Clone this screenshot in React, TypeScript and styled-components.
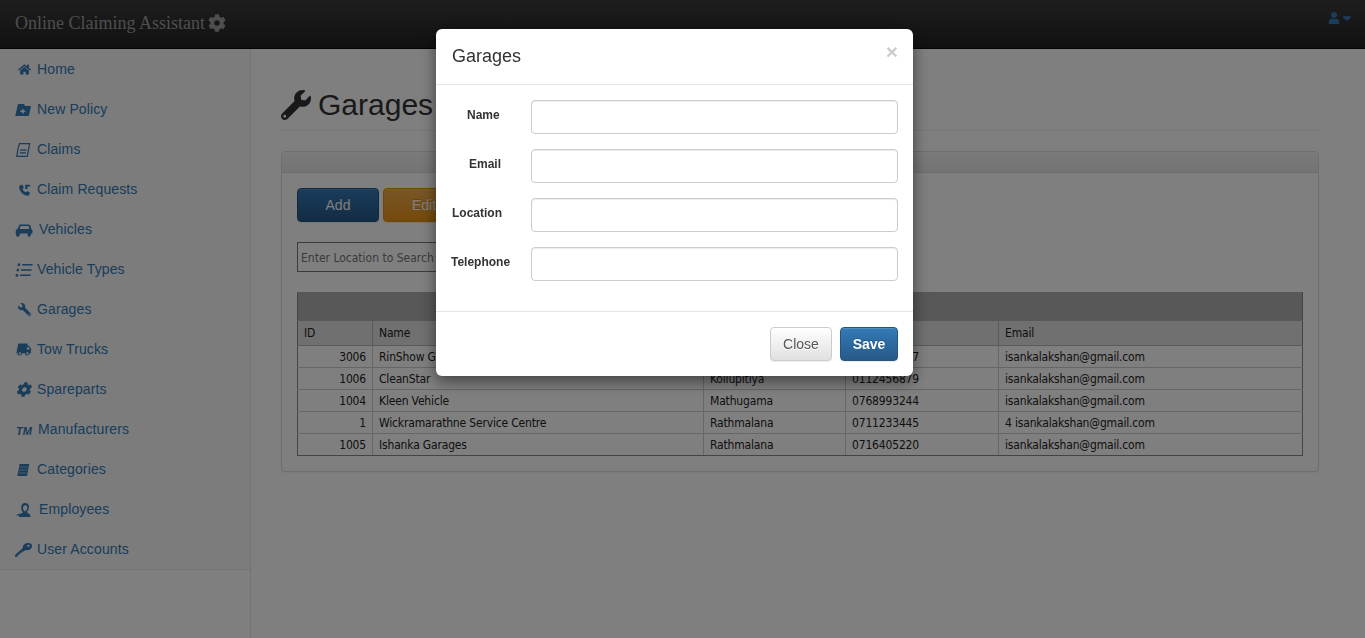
import * as React from "react";
import styled, { createGlobalStyle } from "styled-components";
import { FaCaretDown, FaCog, FaHome, FaTruck, FaUser, FaWrench } from "react-icons/fa";

const GlobalStyle = createGlobalStyle`
  * { box-sizing: border-box; }
  html, body { margin: 0; height: 100%; overflow: hidden; }
  body {
    font-family: "Liberation Sans", Arial, sans-serif;
    font-size: 14px;
    color: #333;
    background: #fff;
  }
`;

const Shell = styled.div`
  display: flex;
  flex-direction: column;
  height: 100vh;
`;

const Navbar = styled.header`
  display: flex;
  align-items: center;
  justify-content: space-between;
  flex: 0 0 49px;
  padding: 0 11px 2px 15px;
  background: linear-gradient(to bottom, #3c3c3c, #222);
  border-bottom: 1px solid #080808;
`;

const Brand = styled.div`
  display: flex;
  align-items: center;
  gap: 3px;
  font-family: "Liberation Serif", "Times New Roman", serif;
  font-size: 18px;
  color: #9d9d9d;
`;

const UserMenu = styled.div`
  display: flex;
  align-items: center;
  color: #337ab7;
  margin-bottom: 10px;
`;

const Columns = styled.div`
  display: flex;
  flex: 1;
  min-height: 0;
`;

const Sidebar = styled.nav`
  flex: 0 0 250px;
  align-self: flex-start;
  background: #f8f8f8;
  border-bottom: 1px solid #e7e7e7;
`;

const NavItem = styled.a<{ $gap: number }>`
  display: flex;
  align-items: center;
  gap: ${(p) => p.$gap}px;
  height: 40px;
  padding: 0 15px;
  color: #337ab7;
  line-height: 20px;
  letter-spacing: 0.12px;
`;

const NavIcon = styled.span<{ $slant?: boolean }>`
  display: inline-flex;
  align-items: center;
  justify-content: center;
  width: 18px;
  height: 18px;
  font-size: 14px;
  transform: ${(p) => (p.$slant ? "skewX(-12deg)" : "none")};
`;

const TmMark = styled.span`
  margin-top: 3px;
  font-size: 11px;
  font-weight: 700;
  font-style: italic;
  letter-spacing: 0;
  text-align: center;
`;

const FlippedWrench = styled(FaWrench)`
  transform: scaleX(-1);
`;

const Main = styled.main`
  flex: 1;
  min-width: 0;
  padding: 36px 46px 0 30px;
  border-left: 1px solid #e7e7e7;
  background: #fff;
`;

const PageTitle = styled.h1`
  display: flex;
  align-items: center;
  gap: 7px;
  margin: 0 0 20px;
  padding-bottom: 5px;
  height: 46px;
  font-size: 30px;
  font-weight: 500;
  line-height: 40px;
  color: #333;
  border-bottom: 1px solid #eee;
`;

const Panel = styled.section`
  border: 1px solid #ddd;
  border-radius: 4px;
  background: #fff;
  box-shadow: 0 1px 1px rgba(0, 0, 0, 0.05);
`;

const PanelHeading = styled.div`
  height: 21px;
  background: linear-gradient(to bottom, #f5f5f5, #e8e8e8);
  border-bottom: 1px solid #ddd;
  border-radius: 3px 3px 0 0;
`;

const PanelBody = styled.div`
  padding: 15px;
`;

const Toolbar = styled.div`
  display: flex;
  gap: 4px;
  margin-bottom: 20px;
`;

const Button = styled.button<{ $variant: "primary" | "warning" | "default" }>`
  height: 34px;
  padding: 0;
  border-radius: 4px;
  font-family: inherit;
  font-size: 14px;
  color: ${(p) => (p.$variant === "default" ? "#555" : "#fff")};
  text-shadow: ${(p) => (p.$variant === "default" ? "0 1px 0 #fff" : "0 -1px 0 rgba(0, 0, 0, 0.2)")};
  box-shadow: inset 0 1px 0 rgba(255, 255, 255, 0.15), 0 1px 1px rgba(0, 0, 0, 0.075);
  border: 1px solid
    ${(p) =>
      p.$variant === "primary" ? "#245580" : p.$variant === "warning" ? "#e38d13" : "#ccc"};
  background: ${(p) =>
    p.$variant === "primary"
      ? "linear-gradient(to bottom, #337ab7, #265a88)"
      : p.$variant === "warning"
        ? "linear-gradient(to bottom, #f0ad4e, #eb9316)"
        : "linear-gradient(to bottom, #fff, #e0e0e0)"};
`;

const WideButton = styled(Button)`
  width: 82px;
`;

const CloseButton = styled(Button)`
  width: 62px;
`;

const SaveButton = styled(Button)`
  width: 58px;
  font-weight: 700;
`;

const SearchInput = styled.input`
  display: block;
  width: 300px;
  height: 30px;
  margin-bottom: 20px;
  padding: 2px 3px 0;
  border: 1px solid #777;
  font-family: "DejaVu Sans Condensed", "DejaVu Sans", sans-serif;
  font-size: 12px;
  &::placeholder { color: #757575; opacity: 1; }
`;

const Grid = styled.table`
  width: 1006px;
  border-collapse: collapse;
  table-layout: fixed;
  font-family: "DejaVu Sans Condensed", "DejaVu Sans", sans-serif;
  font-size: 12px;
  letter-spacing: -0.17px;
  color: #222;
  th:first-child, td:first-child { border-left-color: #888; }
  th:last-child, td:last-child { border-right-color: #888; }
  tbody tr:last-child td { border-bottom-color: #888; }
`;

const GridTitle = styled.th`
  height: 28px;
  background: #b0b0b0;
  border: 1px solid #b0b0b0;
`;

const GridHead = styled.th`
  height: 25px;
  padding: 0 6px;
  background: #e0e0e0;
  border: 1px solid #b5b5b5;
  font-weight: 400;
  text-align: left;
`;

const GridCell = styled.td<{ $num?: boolean }>`
  height: 22px;
  padding: 0 6px;
  border: 1px solid #ccc;
  text-align: ${(p) => (p.$num ? "right" : "left")};
  white-space: nowrap;
  overflow: hidden;
`;

const Overlay = styled.div`
  position: fixed;
  inset: 0;
  display: flex;
  justify-content: center;
  align-items: flex-start;
  padding: 29px 16px 0 0;
  background: rgba(0, 0, 0, 0.5);
`;

const Modal = styled.div`
  width: 477px;
  background: #fff;
  border-radius: 6px;
  box-shadow: 0 5px 15px rgba(0, 0, 0, 0.5);
`;

const ModalHeader = styled.div`
  display: flex;
  align-items: center;
  justify-content: space-between;
  height: 56px;
  padding: 0 15px 0 16px;
  border-bottom: 1px solid #e5e5e5;
`;

const ModalTitle = styled.h4`
  margin: 0;
  font-size: 18px;
  font-weight: 500;
  color: #333;
`;

const CloseX = styled.span`
  font-size: 21px;
  font-weight: 700;
  line-height: 1;
  color: #000;
  opacity: 0.2;
  margin-bottom: 10px;
`;

const ModalBody = styled.div`
  display: flex;
  flex-direction: column;
  gap: 15px;
  padding: 15px 15px 30px;
`;

const FieldRow = styled.div`
  display: flex;
  align-items: flex-start;
`;

const FieldLabel = styled.label<{ $indent: number }>`
  flex: 0 0 80px;
  padding: 7px 0 0 ${(p) => p.$indent}px;
  font-size: 12px;
  font-weight: 700;
  line-height: 16px;
  color: #333;
  white-space: nowrap;
`;

const FieldInput = styled.input`
  flex: 1;
  min-width: 0;
  height: 34px;
  border: 1px solid #ccc;
  border-radius: 4px;
  box-shadow: inset 0 1px 1px rgba(0, 0, 0, 0.075);
`;

const ModalFooter = styled.div`
  display: flex;
  justify-content: flex-end;
  gap: 8px;
  padding: 15px;
  border-top: 1px solid #e5e5e5;
`;

const Glyph = ({ children }: { children: React.ReactNode }) => (
  <svg width="18" height="18" viewBox="0 0 18 18" fill="currentColor" fillRule="evenodd">
    {children}
  </svg>
);

const FolderIcon = () => (
  <Glyph>
    <path d="M3 4h6l1 2h6l-2.2 10H0.2L3 4zM7 9.2v1.3H5.4v1.6H7v1.3h1.6v-1.3h1.6v-1.6H8.6V9.2H7z" />
  </Glyph>
);

const ClaimIcon = () => (
  <Glyph>
    <path d="M4.6 3.6h10l-2.3 12.8H1.7L3.5 6.5z" fill="none" stroke="currentColor" strokeWidth="1.2" />
    <path d="M5.2 10.2h6.4M4.8 12.8h6.2" stroke="currentColor" strokeWidth="1.3" />
  </Glyph>
);

const PhoneIcon = () => (
  <Glyph>
    <path d="M5 5.3l2.6-.5 1.2 3-1.3 1.2c.7 1.6 1.7 2.6 3.6 3.2l1.2-1.2 2.6 1.4-.6 2.4c-.5 1-2.5 1.1-4.4.3C7 14 4.8 11 4.2 8c-.2-1.1.1-2.1.8-2.7z" />
    <path d="M10.2 4.8h5v1.7h-2.8v2.6h-2.2z" />
  </Glyph>
);

const CarIcon = () => (
  <Glyph>
    <path d="M5.5 4.4h8c1.5 0 2 1 2.3 2.6l.4 2c1.3.5 1.6 1.5 1.4 2.5l-.4 2h-1c-.2 2-.7 3.2-2.2 3.2s-1.5-1.2-1.3-3.2H5c-.2 2-.5 3.2-2 3.2-2 0-2-1.2-1.9-3.2H.5l.3-2.5c.2-1 .7-1.7 1.7-2l1-2.5c.5-1.5 1-2.1 2-2.1zM5.6 6.1L4.6 9h9.7l-.6-2.9z" />
  </Glyph>
);

const ListIcon = () => (
  <Glyph>
    <path d="M7 4.7h10.6M6 10h10.6M5 15.3h10.6" stroke="currentColor" strokeWidth="1.5" fill="none" />
    <path d="M3 3.4h2.4l-.5 2.6H2.5zM2 8.8h2.3l-.5 2.4H1.5z" />
    <circle cx="1.9" cy="15.4" r="1.4" />
  </Glyph>
);

const CategoryIcon = () => (
  <Glyph>
    <path d="M4.6 4h9.6l-2.2 12H2.4z" />
    <path d="M4.8 7h7.8M4.3 10h7.8M3.8 13h7.8" stroke="#f8f8f8" strokeOpacity="0.55" strokeWidth="0.9" fill="none" />
  </Glyph>
);

const EmployeeIcon = () => (
  <Glyph>
    <path d="M10 3c2.5 0 4.3 1.8 4 4.4-.2 1.8-1.1 3.7-2.4 4.6L15 14.6 15.6 17H4l.2-1.6H1l1.4-1C4 13.6 6.6 13.6 8 12.4 6.7 11 6 9 6.2 7 6.5 4.6 8 3 10 3zM10.6 5c-1.4.6-2.4 1.3-2.6 2.6-.2 1.6.6 3.3 2 3.6 1.5-.4 2.4-2 2.4-3.7 0-1.2-.6-2-1.8-2.5z" />
  </Glyph>
);

const KeyIcon = () => (
  <Glyph>
    <path d="M12.8 3c2.6 0 4.4 1.2 4.2 3.2-.2 2.4-2.6 4-5 4-.6 0-1.1-.1-1.5-.3l-1.7 1.5H7.2l-.3 1.3H5.4l-.4 1.6-1.6.3-1.2 2.2L0 16.9l.4-2.4 7.3-6.3C7.6 5.3 9.8 3 12.8 3zM13.5 4.8c-.7 0-1.3.5-1.3 1.1s.5.9 1.2.9 1.2-.5 1.2-1.1-.4-.9-1.1-.9z" />
  </Glyph>
);

type NavEntry = { label: string; icon: React.ReactNode; gap: number; slant?: boolean };

const navEntries: NavEntry[] = [
  { label: "Home", icon: <FaHome size={13} />, gap: 4 },
  { label: "New Policy", icon: <FolderIcon />, gap: 4 },
  { label: "Claims", icon: <ClaimIcon />, gap: 4 },
  { label: "Claim Requests", icon: <PhoneIcon />, gap: 4 },
  { label: "Vehicles", icon: <CarIcon />, gap: 6 },
  { label: "Vehicle Types", icon: <ListIcon />, gap: 4 },
  { label: "Garages", icon: <FlippedWrench size={13} />, gap: 4 },
  { label: "Tow Trucks", icon: <FaTruck size={15} />, gap: 4, slant: true },
  { label: "Spareparts", icon: <FaCog size={15} />, gap: 4, slant: true },
  { label: "Manufacturers", icon: <TmMark>TM</TmMark>, gap: 5 },
  { label: "Categories", icon: <CategoryIcon />, gap: 4 },
  { label: "Employees", icon: <EmployeeIcon />, gap: 6 },
  { label: "User Accounts", icon: <KeyIcon />, gap: 4 },
];

const garages = [
  ["3006", "RinShow Garages", "Nugegoda", "0112345547", "isankalakshan@gmail.com"],
  ["1006", "CleanStar", "Kollupitiya", "0112456879", "isankalakshan@gmail.com"],
  ["1004", "Kleen Vehicle", "Mathugama", "0768993244", "isankalakshan@gmail.com"],
  ["1", "Wickramarathne Service Centre", "Rathmalana", "0711233445", "4 isankalakshan@gmail.com"],
  ["1005", "Ishanka Garages", "Rathmalana", "0716405220", "isankalakshan@gmail.com"],
];

const fields = [
  { label: "Name", indent: 16 },
  { label: "Email", indent: 18 },
  { label: "Location", indent: 1 },
  { label: "Telephone", indent: 0 },
];

const App = () => (
  <>
    <GlobalStyle />
    <Shell>
      <Navbar>
        <Brand>
          Online Claiming Assistant <FaCog />
        </Brand>
        <UserMenu>
          <FaUser size={12} />
          <FaCaretDown size={14} />
        </UserMenu>
      </Navbar>
      <Columns>
        <Sidebar>
          {navEntries.map((entry) => (
            <NavItem key={entry.label} $gap={entry.gap}>
              <NavIcon $slant={entry.slant}>{entry.icon}</NavIcon>
              {entry.label}
            </NavItem>
          ))}
        </Sidebar>
        <Main>
          <PageTitle>
            <FaWrench />
            Garages
          </PageTitle>
          <Panel>
            <PanelHeading />
            <PanelBody>
              <Toolbar>
                <WideButton $variant="primary">Add</WideButton>
                <WideButton $variant="warning">Edit</WideButton>
              </Toolbar>
              <SearchInput placeholder="Enter Location to Search" />
              <Grid>
                <colgroup>
                  <col width="75" />
                  <col width="331" />
                  <col width="142" />
                  <col width="153" />
                  <col />
                </colgroup>
                <thead>
                  <tr>
                    <GridTitle colSpan={5} />
                  </tr>
                  <tr>
                    <GridHead>ID</GridHead>
                    <GridHead>Name</GridHead>
                    <GridHead>Location</GridHead>
                    <GridHead>Telephone</GridHead>
                    <GridHead>Email</GridHead>
                  </tr>
                </thead>
                <tbody>
                  {garages.map((row) => (
                    <tr key={row[0]}>
                      {row.map((value, i) => (
                        <GridCell key={i} $num={i === 0}>
                          {value}
                        </GridCell>
                      ))}
                    </tr>
                  ))}
                </tbody>
              </Grid>
            </PanelBody>
          </Panel>
        </Main>
      </Columns>
    </Shell>
    <Overlay>
      <Modal>
        <ModalHeader>
          <ModalTitle>Garages</ModalTitle>
          <CloseX>×</CloseX>
        </ModalHeader>
        <ModalBody>
          {fields.map((field) => (
            <FieldRow key={field.label}>
              <FieldLabel $indent={field.indent}>{field.label}</FieldLabel>
              <FieldInput />
            </FieldRow>
          ))}
        </ModalBody>
        <ModalFooter>
          <CloseButton $variant="default">Close</CloseButton>
          <SaveButton $variant="primary">Save</SaveButton>
        </ModalFooter>
      </Modal>
    </Overlay>
  </>
);

export default App;
